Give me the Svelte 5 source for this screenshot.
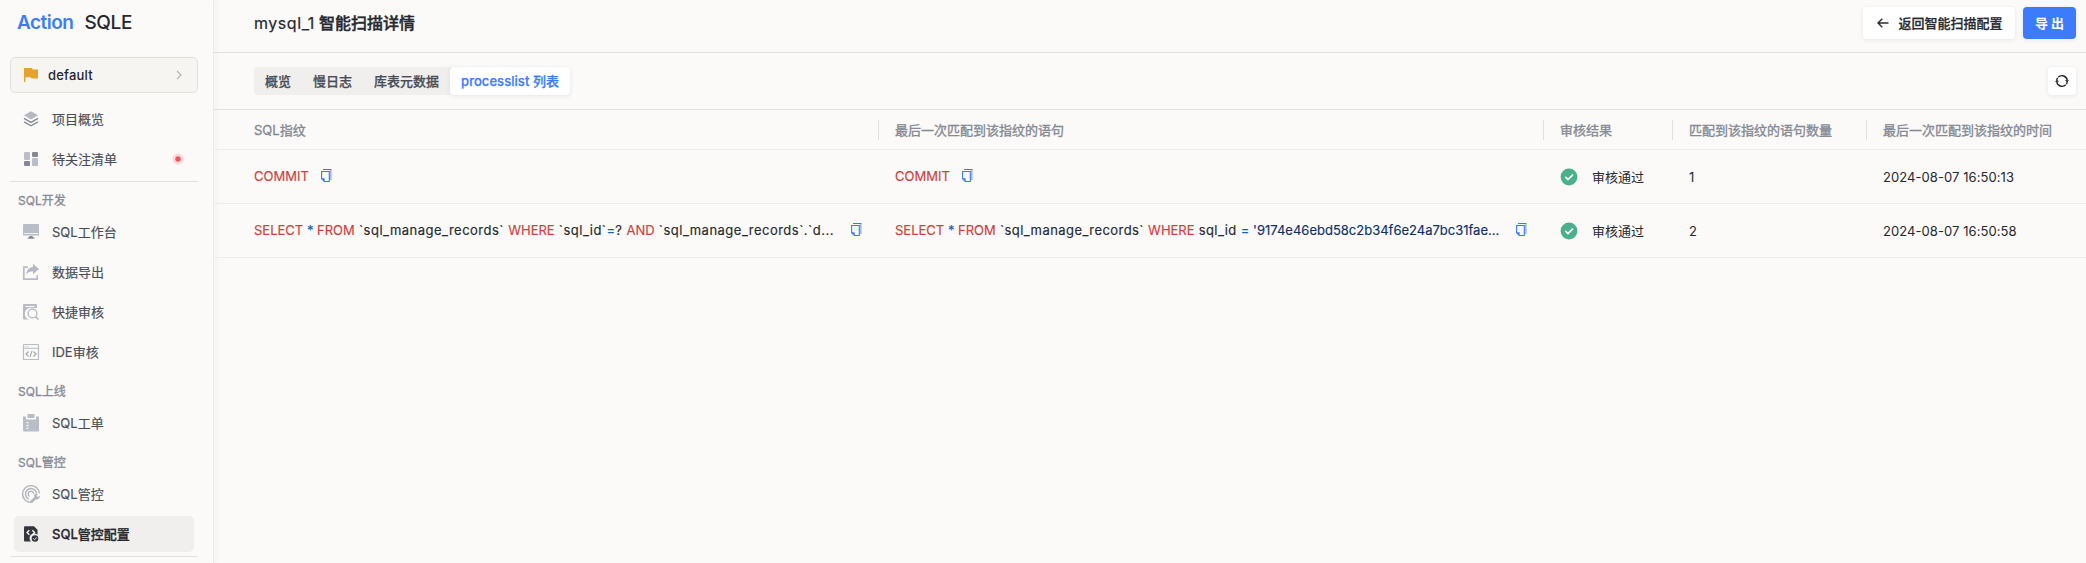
<script>
  const groups = [
    { items: [
      { icon: 'layers', label: '项目概览' },
      { icon: 'grid', label: '待关注清单', dot: true }
    ], divider: true },
    { title: 'SQL开发', items: [
      { icon: 'monitor', label: 'SQL工作台' },
      { icon: 'share', label: '数据导出' },
      { icon: 'search', label: '快捷审核' },
      { icon: 'ide', label: 'IDE审核' }
    ] },
    { title: 'SQL上线', items: [{ icon: 'clipboard', label: 'SQL工单' }] },
    { title: 'SQL管控', items: [
      { icon: 'radar', label: 'SQL管控' },
      { icon: 'config', label: 'SQL管控配置', active: true }
    ] }
  ];
  const tabs = ['概览', '慢日志', '库表元数据', 'processlist 列表'];
  const columns = ['SQL指纹', '最后一次匹配到该指纹的语句', '审核结果', '匹配到该指纹的语句数量', '最后一次匹配到该指纹的时间'];
  const rows = [
    {
      print: [['k', 'COMMIT']],
      last: [['k', 'COMMIT']],
      count: 1, time: '2024-08-07 16:50:13'
    },
    {
      clipped: true,
      print: [['k', 'SELECT'], ['o', ' * '], ['k', 'FROM'], ['n', ' `sql_manage_records` '], ['k', 'WHERE'], ['n', ' `sql_id`'], ['o', '='], ['n', '? '], ['k', 'AND'], ['n', ' `sql_manage_records`.`d...']],
      last: [['k', 'SELECT'], ['o', ' * '], ['k', 'FROM'], ['n', ' `sql_manage_records` '], ['k', 'WHERE'], ['n', ' sql_id '], ['o', '='], ['s', " '9174e46ebd58c2b34f6e24a7bc31fae..."]],
      count: 2, time: '2024-08-07 16:50:58'
    }
  ];
</script>

{#snippet icon(name)}
  <svg class="ico" viewBox="0 0 18 18" width="18" height="18">
    {#if name === 'layers'}
      <path d="M9 1.200 16 5.200 9 9.500 2 5.200Z" fill="#b5b9c2" />
      <path d="m2 8.400 7 4 7-4M2 11.800l7 4 7-4" fill="none" stroke="#858995" stroke-width="1.400" />
    {:else if name === 'grid'}
      <rect x="2" y="2" width="6" height="8" rx="1" fill="#babec7" />
      <rect x="10" y="2" width="6" height="5" rx="1" fill="#858995" />
      <rect x="2" y="11" width="6" height="5" rx="1" fill="#858995" />
      <rect x="10" y="8" width="6" height="8" rx="1" fill="#babec7" />
    {:else if name === 'monitor'}
      <path d="M2 1h14a1 1 0 0 1 1 1v10.500H1V2a1 1 0 0 1 1-1Z" fill="#b8bdc6" />
      <path d="M2 10.500h14" stroke="#f0f1f2" stroke-width="1" />
      <path d="M7.500 13h3l.6 1.500h1.300v1.300H5.700v-1.300h1.200Z" fill="#858995" />
    {:else if name === 'share'}
      <path d="M6 4.200H1.800v12h13.400v-4" fill="none" stroke="#b8bcc4" stroke-width="1.700" />
      <path d="M11 .8 17 6l-6 5.200V8.200c-3 0-5 .8-6.800 3.300C4.500 7.300 7 4.500 11 4Z" fill="#b3b8c1" />
    {:else if name === 'search'}
      <path d="M1 2a1 1 0 0 1 1-1h12a1 1 0 0 1 1 1v3H10a5.500 5.500 0 0 0-2.600 11.500H2a1 1 0 0 1-1-1Z" fill="#b8bdc5" />
      <path d="M3.500 3.500h9" stroke="#fbfaf8" />
      <circle cx="10.500" cy="10.500" r="4.400" fill="#fbfaf8" stroke="#b3b7c0" stroke-width="1.300" />
      <path d="m13.500 13.500 3 3" stroke="#b3b7c0" stroke-width="1.500" />
    {:else if name === 'ide'}
      <rect x="1.500" y="1.500" width="15" height="15" rx=".6" fill="none" stroke="#b8bcc4" stroke-width="1.200" />
      <path d="M1.500 5.300h15M3.500 3.500h1M5.500 3.500h1" stroke="#b8bcc4" />
      <path d="m6.500 8.500-2.500 2.500 2.500 2.500M11.500 8.500 14 11l-2.500 2.500M10 8l-2 6" fill="none" stroke="#a3a7b0" stroke-width="1.100" />
    {:else if name === 'clipboard'}
      <path d="M1 2.500h3v3h10v-3h3v14a1 1 0 0 1-1 1H2a1 1 0 0 1-1-1Z" fill="#b8bdc6" />
      <rect x="5.500" y="0" width="7" height="4" fill="#b8bdc6" />
      <path d="M4.500 8.700h2M4.500 11.500h2M4.500 14.300h2" stroke="#fbfaf8" stroke-width="1.300" />
    {:else if name === 'radar'}
      <g fill="none" stroke="#b1b5be" stroke-width="1.400">
        <path d="M7.600 17.300A8.400 8.400 0 1 1 17.400 8.500" />
        <path d="M6.600 14A5.500 5.500 0 1 1 14.500 8.400" />
        <path d="M7.500 11.500A2.800 2.800 0 1 1 11.800 9" />
        <path d="m9.300 17 4.400-4.400" stroke-width="2.600" stroke-linecap="round" />
      </g>
      <path d="M12 10.500a3.200 3.200 0 0 1 4-1.700l-1.600 2 1.300 1.300 2.100-1.400a3.200 3.200 0 0 1-4.300 3.500Z" fill="#b1b5be" />
    {:else}
      <path d="M3 1.200h9l3.500 3.500v5A4.500 4.500 0 0 0 9 16.500H3a1 1 0 0 1-1-1V2.200a1 1 0 0 1 1-1Z" fill="#33363c" />
      <path d="M7.300 5.200 5 7.500l2.300 2.300M10.300 5.200l2.300 2.300-2.300 2.300" fill="none" stroke="#fff" stroke-width="1.300" />
      <circle cx="13" cy="13.500" r="3.300" fill="#33363c" />
      <path d="m11.300 13.500 1.300 1.200 2.200-2.300" fill="none" stroke="#f0efed" stroke-width="1" />
    {/if}
  </svg>
{/snippet}

{#snippet sql(parts, extra)}
  <div class="sql {extra}">
    <span class="code">{#each parts as [kind, text]}<span class={kind}>{text}</span>{/each}</span>
    <svg class="copy" viewBox="0 0 11 13" width="11" height="13">
      <path d="M9.700 1v10" fill="none" stroke="#9dbbfc" stroke-width="1.800" />
      <path d="M2 .5h8.500" stroke="#3c78f5" stroke-width="1" />
      <path d="M.6 2.500h7.700v10H3.300L.6 9.800Z" fill="#fbfaf8" stroke="#3c78f5" stroke-width="1.100" />
      <path d="M.6 9.300h3v3.200Z" fill="#3c78f5" />
    </svg>
  </div>
{/snippet}

<div class="app">
  <aside>
    <div class="logo"><b>Action</b><span>SQLE</span></div>
    <div class="project">
      <svg viewBox="0 0 14 14" width="14" height="14"><path d="M0 0h8l.8 1.500H14v9H7.500L6.600 9.300H1.400V14H0Z" fill="#e5a32d" /></svg>
      <span>default</span>
      <svg viewBox="0 0 8 10" width="8" height="10"><path d="m2 1 4 4-4 4" fill="none" stroke="#b2b4b8" stroke-width="1.100" /></svg>
    </div>
    <nav>
      {#each groups as group}
        {#if group.title}<h2>{group.title}</h2>{/if}
        {#each group.items as item}
          <div class="item" class:active={item.active}>
            {@render icon(item.icon)}
            <span>{item.label}</span>
            {#if item.dot}
              <svg viewBox="0 0 12 12" width="12" height="12"><circle cx="6" cy="6" r="5.600" fill="#fbd9da" /><circle cx="6" cy="6" r="2.700" fill="#ee5560" /></svg>
            {/if}
          </div>
        {/each}
        {#if group.divider}<hr />{/if}
      {/each}
      <hr />
    </nav>
  </aside>
  <main>
    <header>
      <h1><span>mysql_1</span> 智能扫描详情</h1>
      <div class="actions">
        <button class="back">
          <svg viewBox="0 0 12 10" width="12" height="10"><path d="M11.500 5H1.200M5.300.8 1 5l4.300 4.200" fill="none" stroke="#2b2d33" stroke-width="1.400" /></svg>
          返回智能扫描配置
        </button>
        <button class="export">导 出</button>
      </div>
    </header>
    <div class="toolbar">
      <div class="tabs">
        {#each tabs as tab, i}<span class:on={i === 3}>{tab}</span>{/each}
      </div>
      <button class="refresh" aria-label="refresh">
        <svg viewBox="0 0 14 14" width="14" height="14">
          <g fill="none" stroke="#222" stroke-width="1.400"><path d="M3.200 3.200A5.400 5.400 0 0 1 12.300 6.500M10.800 10.800A5.400 5.400 0 0 1 1.700 7.500M1.700 5.900A5.400 5.400 0 0 1 2.600 3.900M12.300 8.100A5.400 5.400 0 0 1 11.400 10.100" /></g>
          <path d="M0 7.700h4L2 5.400ZM10 6.300h4l-2 2.300Z" fill="#222" />
        </svg>
      </button>
    </div>
    <div class="row head">
      {#each columns as c}<div class="cell">{c}</div>{/each}
    </div>
    {#each rows as row}
      <div class="row">
        <div class="cell">{@render sql(row.print, row.clipped ? 'print' : '')}</div>
        <div class="cell">{@render sql(row.last, row.clipped ? 'last' : '')}</div>
        <div class="cell status">
          <svg viewBox="0 0 18 18" width="18" height="18"><circle cx="9" cy="9" r="8.400" fill="#4aaf8d" /><path d="m5.300 8.900 2.700 2.700 5-5" fill="none" stroke="#fff" stroke-width="1.700" /></svg>
          审核通过
        </div>
        <div class="cell">{row.count}</div>
        <div class="cell time">{row.time}</div>
      </div>
    {/each}
  </main>
</div>

<style>
  :global(body) { background: #fbfaf8; }
  .app { display: flex; height: 563px; overflow: hidden; box-sizing: border-box; font: 400 13px/20px Inter, "Noto Sans CJK SC", sans-serif; color: #26282e; background: #fbfaf8; }
  .app * { box-sizing: border-box; }
  aside { width: 214px; flex: none; border-right: 1px solid #ecebe9; box-shadow: 2px 0 6px rgba(60, 50, 30, .04); }
  .logo { display: flex; gap: 11px; height: 57px; padding: 11px 0 0 17px; font-size: 19px; line-height: 24px; }
  .logo b { font-weight: 600; color: #3c7cfb; letter-spacing: -.5px; }
  .logo span { font-weight: 500; letter-spacing: -.4px; }
  .project { display: flex; align-items: center; width: 188px; height: 36px; margin: 0 0 8px 10px; padding: 0 14px 0 13px; border: 1px solid #e1e0de; border-radius: 5px; background: #f6f5f2; font-weight: 500; }
  .project span { flex: 1; margin-left: 10px; letter-spacing: .2px; }
  nav { padding: 0 19px 0 14px; }
  .item { display: flex; align-items: center; height: 36px; margin-bottom: 4px; padding: 0 10px 0 8px; border-radius: 5px; color: #494d56; -webkit-text-stroke: .15px; }
  .item span { flex: 1; margin-left: 12px; }
  .ico { flex: none; }
  .item.active { background: #f0efed; color: #26282e; font-weight: 500; -webkit-text-stroke: .3px; }
  h2 { height: 31px; margin: 0; padding: 8px 0 0 4px; font-size: 12px; line-height: 20px; font-weight: 400; color: #858a95; -webkit-text-stroke: .3px; }
  hr { width: 188px; height: 1px; margin: 0 0 1px -4px; border: 0; background: #e1e0de; }
  main { flex: 1; min-width: 0; }
  header, .toolbar { display: flex; justify-content: space-between; padding: 0 10px 0 40px; border-bottom: 1px solid #e1e0de; }
  header { height: 53px; padding-top: 7px; }
  h1 { margin: 0; font-size: 16px; line-height: 32px; font-weight: 500; -webkit-text-stroke: .4px; }
  h1 span { letter-spacing: .55px; font-weight: 400; -webkit-text-stroke: .2px; }
  .actions { display: flex; gap: 8px; }
  button { display: flex; align-items: center; justify-content: center; height: 32px; padding: 0; border: 0; border-radius: 4px; background: #fff; font: inherit; font-weight: 500; color: #26282e; box-shadow: 0 1px 5px rgba(30, 30, 30, .09); }
  .back { gap: 9px; width: 152px; padding-left: 2px; -webkit-text-stroke: .25px; }
  .export { width: 53px; background: #3c7cfb; color: #fff; font-weight: 700; }
  .toolbar { height: 57px; padding-top: 14px; }
  .tabs { display: flex; height: 28px; border-radius: 4px; background: #f0efed; font-weight: 500; line-height: 28px; color: #494d56; -webkit-text-stroke: .25px; }
  .tabs span { padding: 0 11px; }
  .tabs .on { width: 120px; white-space: nowrap; letter-spacing: .05px; border-radius: 4px; background: #fff; color: #3c7cfb; box-shadow: 0 1px 5px rgba(30, 30, 30, .09); }
  .refresh { width: 28px; height: 28px; }
  .row { display: grid; grid-template-columns: 664px 665px 129px 194px 220px; height: 54px; border-bottom: 1px solid #eeedeb; }
  .cell { display: flex; align-items: center; padding-left: 17px; white-space: nowrap; }
  .cell:first-child { padding-left: 40px; }
  .head { height: 40px; color: #858a95; font-weight: 400; -webkit-text-stroke: .35px; }
  .head .cell + .cell { background: linear-gradient(#e1e0de, #e1e0de) left center / 1px 20px no-repeat; }
  .sql { display: flex; align-items: center; gap: 12px; padding-bottom: 2px; }
  .code { white-space: pre; -webkit-text-stroke: .15px; }
  .print .code { width: 585px; }
  .last .code { width: 609px; }
  .print .n { letter-spacing: .49px; }
  .k { color: #cf3e41; }
  .n { letter-spacing: .44px; }
  .o { color: #1260c0; }
  .s { color: #0a3069; }
  .status { gap: 14px; }
  .time { letter-spacing: .07px; }
</style>
